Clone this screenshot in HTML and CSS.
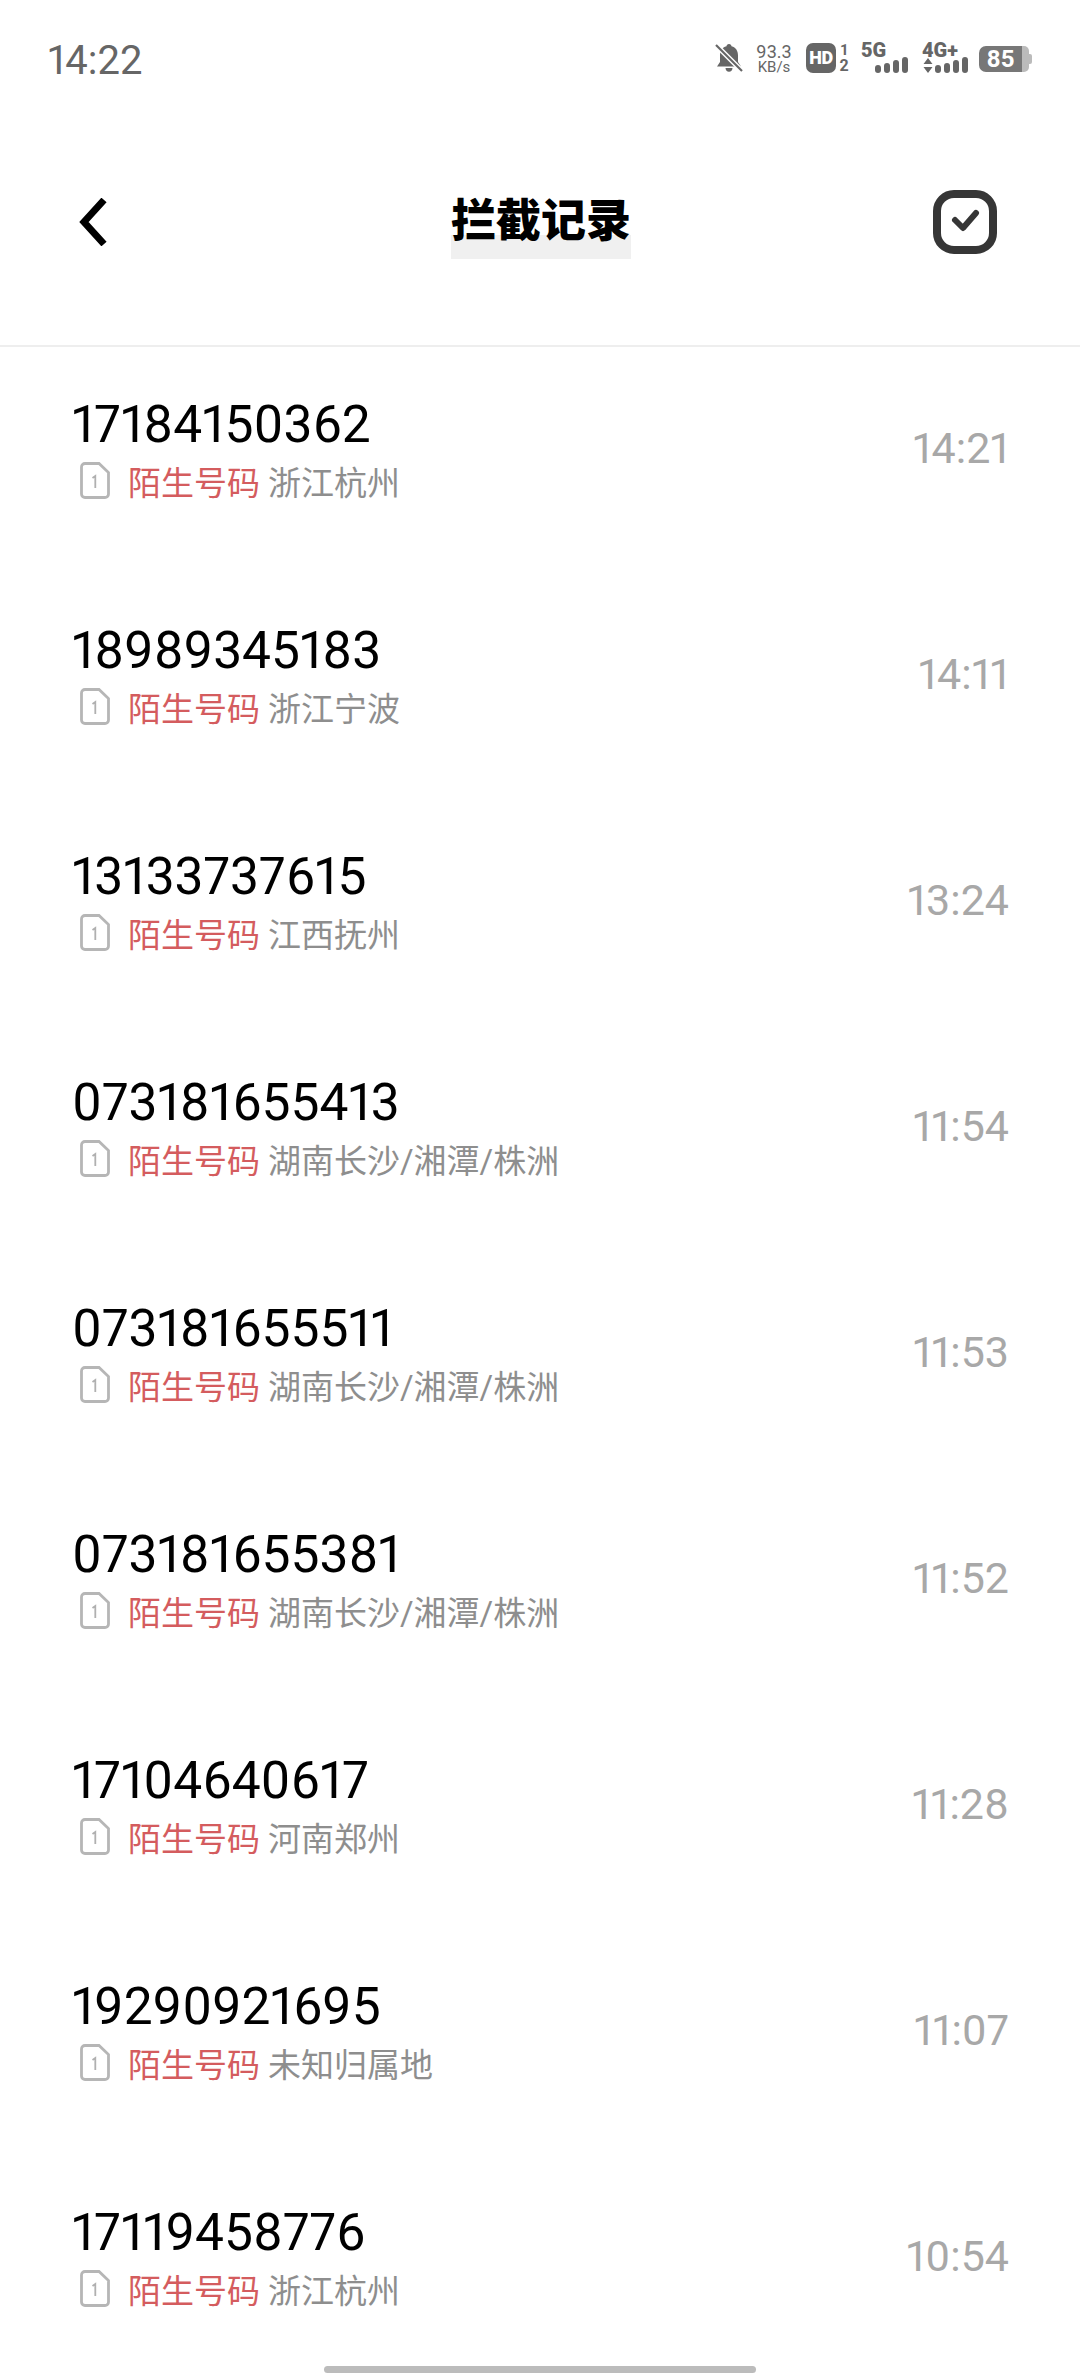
FILE: index.html
```html
<!DOCTYPE html>
<html lang="zh-CN">
<head>
  <meta charset="UTF-8">
  <meta name="viewport" content="width=device-width, initial-scale=1.0">
  <title>拦截记录</title>
  <link rel="stylesheet" href="styles.css">
</head>
<body>
  <svg class="defs" width="0" height="0">
    <symbol id="sim-1" viewBox="0 0 30 37">
      <path d="M5 1.500h14l9.500 9V32a3.500 3.500 0 0 1-3.500 3.500H5A3.500 3.500 0 0 1 1.500 32V5A3.500 3.500 0 0 1 5 1.500z" fill="none" stroke="#b6b6b6" stroke-width="2.800"/>
      <path d="M12.500 16l2.800-2v12" fill="none" stroke="#b0b0b0" stroke-width="1.800"/>
    </symbol>
  </svg>
  <div class="page">
    <div class="status-bar">
      <span class="clock">14:22</span>
      <div class="status-icons">
        <svg class="ic-bell" width="28" height="30" viewBox="0 0 28 30">
          <path d="M14 1c1.500 0 2.500 1 2.500 2.300C21 4.500 23 8 23 12.500V19l3 4.500H2L5 19v-6.500C5 8 7 4.500 11.500 3.300 11.500 2 12.500 1 14 1zM10.500 25h7c0 2-1.500 3.800-3.500 3.800S10.500 27 10.500 25z" fill="#666"/>
          <path d="M1 2l26 26" stroke="#fff" stroke-width="5"/>
          <path d="M1 2l26 26" stroke="#666" stroke-width="2.200"/>
        </svg>
        <div class="net-speed"><span>93.3</span><span class="unit">KB/s</span></div>
        <div class="hd-group">
          <span class="hd">HD</span>
          <div class="sim-nums"><span>1</span><span class="two">2</span></div>
        </div>
        <div class="signal">
          <span class="net-label">5G</span>
          <div class="bars"><i class="b1"></i><i class="b2"></i><i class="b3"></i><i class="b4"></i></div>
        </div>
        <div class="signal signal-4g">
          <span class="net-label">4G+</span>
          <div class="bars-row">
            <svg width="10" height="15" viewBox="0 0 10 15"><path d="M5 0l4.500 6H.5zM5 15L.5 9h9z" fill="#666"/></svg>
            <div class="bars"><i class="b1"></i><i class="b2"></i><i class="b3"></i><i class="b4"></i></div>
          </div>
        </div>
        <div class="battery"><span class="level">85</span><i class="rest"></i><i class="tip"></i></div>
      </div>
    </div>

    <div class="nav">
      <svg class="back" width="29" height="48" viewBox="0 0 29 48">
        <path d="M25 2L5 24l20 22" fill="none" stroke="#000" stroke-width="7"/>
      </svg>
      <h1 class="title">拦截记录</h1>
      <svg class="check" width="64" height="64" viewBox="0 0 64 64">
        <rect x="4" y="4" width="56" height="56" rx="17" fill="none" stroke="#363636" stroke-width="8"/>
        <path d="M22 30l8 8 13-15" fill="none" stroke="#363636" stroke-width="6" stroke-linecap="round" stroke-linejoin="round"/>
      </svg>
    </div>

    <div class="list">
      <div class="row">
        <div class="info">
          <div class="number">17184150362</div>
          <div class="sub"><svg class="sim" width="30" height="37"><use href="#sim-1"/></svg><span class="tag">陌生号码</span><span class="place">浙江杭州</span></div>
        </div>
        <span class="time">14:21</span>
      </div>
      <div class="row">
        <div class="info">
          <div class="number">18989345183</div>
          <div class="sub"><svg class="sim" width="30" height="37"><use href="#sim-1"/></svg><span class="tag">陌生号码</span><span class="place">浙江宁波</span></div>
        </div>
        <span class="time">14:11</span>
      </div>
      <div class="row">
        <div class="info">
          <div class="number">13133737615</div>
          <div class="sub"><svg class="sim" width="30" height="37"><use href="#sim-1"/></svg><span class="tag">陌生号码</span><span class="place">江西抚州</span></div>
        </div>
        <span class="time">13:24</span>
      </div>
      <div class="row">
        <div class="info">
          <div class="number">073181655413</div>
          <div class="sub"><svg class="sim" width="30" height="37"><use href="#sim-1"/></svg><span class="tag">陌生号码</span><span class="place">湖南长沙/湘潭/株洲</span></div>
        </div>
        <span class="time">11:54</span>
      </div>
      <div class="row">
        <div class="info">
          <div class="number">073181655511</div>
          <div class="sub"><svg class="sim" width="30" height="37"><use href="#sim-1"/></svg><span class="tag">陌生号码</span><span class="place">湖南长沙/湘潭/株洲</span></div>
        </div>
        <span class="time">11:53</span>
      </div>
      <div class="row">
        <div class="info">
          <div class="number">073181655381</div>
          <div class="sub"><svg class="sim" width="30" height="37"><use href="#sim-1"/></svg><span class="tag">陌生号码</span><span class="place">湖南长沙/湘潭/株洲</span></div>
        </div>
        <span class="time">11:52</span>
      </div>
      <div class="row">
        <div class="info">
          <div class="number">17104640617</div>
          <div class="sub"><svg class="sim" width="30" height="37"><use href="#sim-1"/></svg><span class="tag">陌生号码</span><span class="place">河南郑州</span></div>
        </div>
        <span class="time">11:28</span>
      </div>
      <div class="row">
        <div class="info">
          <div class="number">19290921695</div>
          <div class="sub"><svg class="sim" width="30" height="37"><use href="#sim-1"/></svg><span class="tag">陌生号码</span><span class="place">未知归属地</span></div>
        </div>
        <span class="time">11:07</span>
      </div>
      <div class="row">
        <div class="info">
          <div class="number">17119458776</div>
          <div class="sub"><svg class="sim" width="30" height="37"><use href="#sim-1"/></svg><span class="tag">陌生号码</span><span class="place">浙江杭州</span></div>
        </div>
        <span class="time">10:54</span>
      </div>
    </div>

    <div class="home-bar"></div>
  </div>
</body>
</html>
```

FILE: styles.css
```css
* {
  box-sizing: border-box;
}
html, body {
  margin: 0;
  padding: 0;
  background-color: #fff;
}
.defs {
  display: block;
  height: 0;
}
.page {
  position: relative;
  width: 1080px;
  height: 2376px;
  overflow: hidden;
  font-family: Roboto, "Noto Sans CJK SC", sans-serif;
  font-feature-settings: "pnum";
}

/* status bar */
.status-bar {
  display: flex;
  justify-content: space-between;
  align-items: center;
  height: 120px;
  padding: 0 48px 0 48px;
  color: #666;
}
.clock {
  font-size: 40px;
}
.status-icons {
  display: flex;
  align-items: flex-start;
  height: 30px;
  margin-bottom: 4px;
}
.net-speed {
  display: flex;
  flex-direction: column;
  align-items: center;
  width: 38px;
  margin-left: 12px;
  font-size: 18px;
  line-height: 17px;
}
.net-speed .unit {
  font-size: 15px;
  line-height: 15px;
}
.hd-group {
  display: flex;
  margin-left: 13px;
}
.hd {
  width: 30px;
  height: 30px;
  border-radius: 7px;
  background-color: #666;
  color: #fff;
  font-size: 18px;
  font-weight: 900;
  line-height: 30px;
  text-align: center;
  letter-spacing: -0.500px;
}
.sim-nums {
  display: flex;
  flex-direction: column;
  align-items: center;
  width: 12px;
  margin-left: 2px;
  font-size: 15px;
  font-weight: 700;
  line-height: 15px;
}
.sim-nums .two {
  font-size: 16px;
}
.signal {
  position: relative;
  width: 47px;
  height: 30px;
  margin-left: 11px;
  display: flex;
  justify-content: flex-end;
  align-items: flex-end;
}
.signal-4g {
  width: 46px;
  margin-left: 14px;
}
.net-label {
  position: absolute;
  left: 0;
  top: -3px;
  font-size: 20px;
  font-weight: 900;
  line-height: 20px;
  white-space: nowrap;
}
.bars-row {
  display: flex;
  align-items: flex-end;
  gap: 2px;
}
.bars {
  display: flex;
  align-items: flex-end;
  gap: 3px;
}
.bars i {
  display: block;
  width: 6px;
  border-radius: 3px;
  background-color: #666;
}
.bars .b1 { height: 8px; }
.bars .b2 { height: 10px; }
.bars .b3 { height: 13px; }
.bars .b4 { height: 16px; }
.battery {
  display: flex;
  align-items: center;
  margin: 3px 0 0 11px;
  height: 26px;
}
.battery .level {
  width: 43px;
  height: 26px;
  border-radius: 7px 0 0 7px;
  background-color: #777;
  color: #fff;
  font-size: 24px;
  font-weight: 700;
  line-height: 26px;
  text-align: center;
}
.battery .rest {
  display: block;
  width: 7px;
  height: 26px;
  border-radius: 0 5px 5px 0;
  background-color: #bbb;
}
.battery .tip {
  display: block;
  width: 3px;
  height: 10px;
  border-radius: 0 2px 2px 0;
  background-color: #bbb;
}

/* header */
.nav {
  display: grid;
  grid-template-columns: 1fr auto 1fr;
  align-items: center;
  height: 227px;
  padding: 0 83px 21px 79px;
  border-bottom: 2px solid #eee;
}
.title {
  position: relative;
  isolation: isolate;
  margin: 0 0 0 6px;
  font-size: 45px;
  font-weight: 900;
  line-height: 56px;
  color: #000;
}
.title::after {
  content: "";
  position: absolute;
  z-index: -1;
  left: 0;
  right: 0;
  bottom: -9px;
  height: 24px;
  background-color: #f0f0f0;
}
.check {
  justify-self: end;
}

/* list */
.row {
  display: flex;
  justify-content: space-between;
  align-items: center;
  height: 226px;
  padding: 38px 71px 74px 72px;
}
.number {
  font-size: 51.500px;
  line-height: 77px;
  color: #000;
}
.sub {
  display: flex;
  align-items: center;
  height: 36px;
  font-size: 33px;
}
.sim {
  margin: 0 18px 0 8px;
}
.tag {
  color: #d45c5e;
  margin-right: 8px;
}
.place {
  color: #8e8e8e;
}
.time {
  margin-top: 11px;
  font-size: 43px;
  color: #a8a8a8;
}

.home-bar {
  position: absolute;
  left: 324px;
  bottom: 3px;
  width: 432px;
  height: 7px;
  border-radius: 4px;
  background-color: #bcbcbc;
}
```
